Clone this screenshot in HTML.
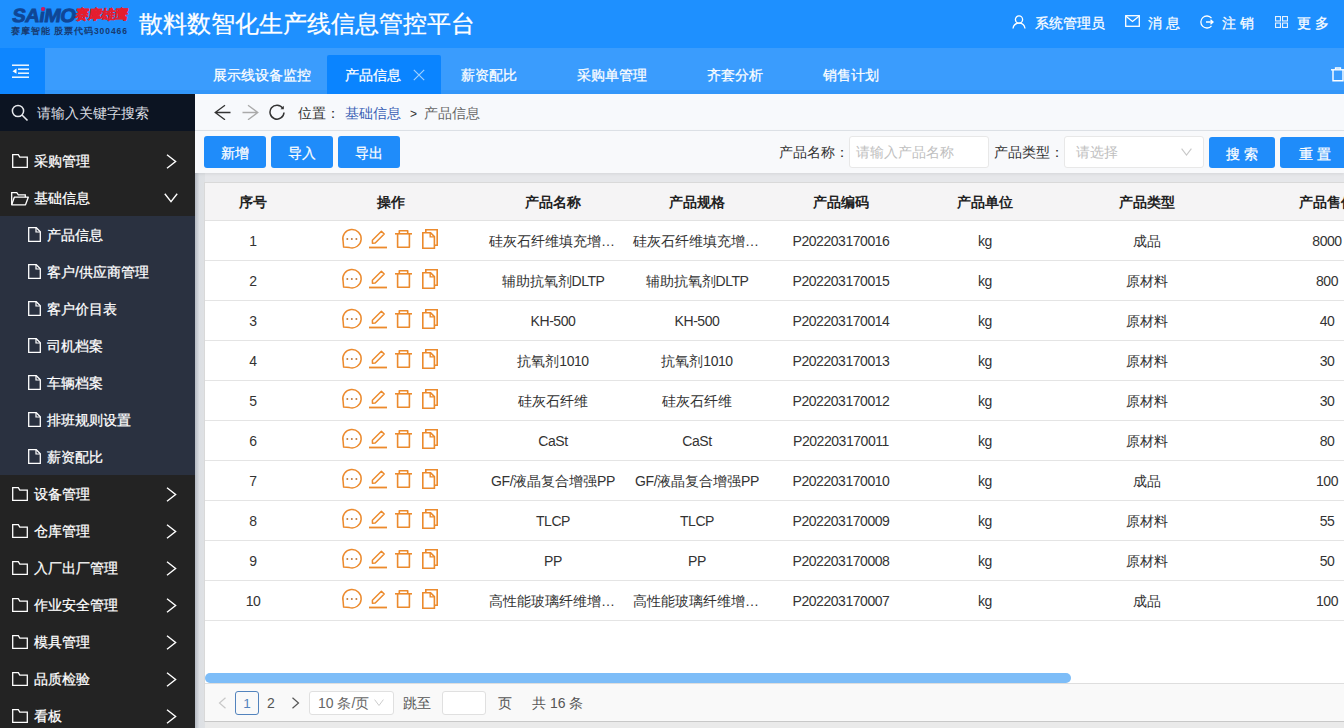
<!DOCTYPE html><html><head><meta charset="utf-8"><style>
*{box-sizing:border-box;margin:0;padding:0}
html,body{width:1344px;height:728px;overflow:hidden;font-family:"Liberation Sans",sans-serif;font-size:14px;color:#333;background:#e6e7ea;position:relative}
.tab,.mi,.btn,.wt{-webkit-text-stroke:0.25px currentColor}
div,span{position:absolute;white-space:nowrap}
#hdr{left:0;top:0;width:1344px;height:48px;background:#1e90ff}
#tabs{left:0;top:48px;width:1344px;height:46px;background:#3a9cfd;border-bottom:4px solid #3296f9}
#toggle{left:0;top:48px;width:45px;height:46px;background:#0e86ff}
.tab{top:56px;height:39px;line-height:39px;color:#fff;font-size:14px}
#side{left:0;top:94px;width:195px;height:634px;background:#232323}
#sside{left:0;top:94px;width:195px;height:37px;background:#0c1422}
.mi{left:0;width:195px;height:37px;color:#fff;font-size:14px}
.mi span{top:1px;line-height:37px}
#sub{left:0;top:216px;width:195px;height:259px;background:#2a3140}
#crumb{left:195px;top:94px;width:1149px;height:37px;background:#f7f9fc;border-bottom:1px solid #dfe3e8}
#tool{left:195px;top:131px;width:1149px;height:42px;background:#f8f9fb;box-shadow:0 1px 3px rgba(0,0,0,0.08)}
.btn{top:136px;height:32px;line-height:32px;padding-top:1px;text-align:center;color:#fff;background:#1f8cfa;border-radius:3px;font-size:14px}
#panel{left:204px;top:182px;width:1150px;height:540px;background:#fff;border:1px solid #d9d9d9;border-bottom-color:#c8c8c8}
#thead{left:205px;top:183px;width:1139px;height:38px;background:#f5f4f5;border-bottom:1px solid #e2e2e2}
.th{top:184px;height:37px;line-height:37px;text-align:center;font-weight:bold;color:#222;font-size:14px}
.row{left:205px;width:1139px;height:40px;border-bottom:1px solid #e4e4e4;background:#fff}
.td{height:40px;line-height:40px;text-align:center;color:#333;font-size:14px;overflow:hidden;text-overflow:ellipsis;padding:0 8px}
svg{position:absolute}
.lat{font-weight:normal;font-size:14px;letter-spacing:-0.45px}
</style></head><body><div style="left:195px;top:722px;width:1149px;height:6px;background:#eaeaea"></div><div id="hdr"></div><div id="tabs"></div><div id="toggle"></div><div id="side"></div><div id="sside"></div><div id="sub"></div><div style="left:195px;top:131px;width:10px;height:597px;background:linear-gradient(to right,#b6bbc3,#dde0e4 45%,#dfe1e4)"></div><div id="crumb"></div><div id="tool"></div><div id="panel"></div><div id="thead"></div><div class="wt" style="left:139px;top:7px;font-size:24px;line-height:34px;color:#fff">散料数智化生产线信息管控平台</div><div style="left:11px;top:4px;font-size:20px;line-height:22px;font-weight:bold;color:#0f4696;letter-spacing:-0.5px;-webkit-text-stroke:0.9px #0f4696;transform:skewX(-9deg) scaleY(0.95);transform-origin:0 100%">SAiMO</div><div style="left:41px;top:7.3px;width:3.8px;height:3.8px;border-radius:50%;background:#d8175a"></div><div style="left:74px;top:5px;font-size:13.5px;line-height:20px;font-weight:bold;color:#e51d2e;letter-spacing:-0.8px;-webkit-text-stroke:0.4px #e51d2e;transform:skewX(-6deg);transform-origin:0 100%">赛摩雄鹰</div><div style="left:11px;top:26px;font-size:8.5px;line-height:10px;font-weight:bold;color:#173a70;letter-spacing:0.95px">赛摩智能 股票代码300466</div><div class="wt" style="left:1035px;top:13px;line-height:20px;font-size:14px;color:#fff">系统管理员</div><div class="wt" style="left:1148px;top:13px;line-height:20px;font-size:14px;color:#fff">消 息</div><div class="wt" style="left:1222px;top:13px;line-height:20px;font-size:14px;color:#fff">注 销</div><div class="wt" style="left:1297px;top:13px;line-height:20px;font-size:14px;color:#fff">更 多</div><div style="left:327px;top:55px;width:114px;height:39px;background:#0a84ff;border-radius:2px 2px 0 0"></div><div class="tab" style="left:213px">展示线设备监控</div><div class="tab" style="left:345px">产品信息</div><div class="tab" style="left:461px">薪资配比</div><div class="tab" style="left:577px">采购单管理</div><div class="tab" style="left:707px">齐套分析</div><div class="tab" style="left:823px">销售计划</div><div style="left:37px;top:95px;line-height:37px;color:#dcdfe4;font-size:14px">请输入关键字搜索</div><div class="mi" style="top:142px"><span style="left:34px">采购管理</span></div><div class="mi" style="top:179px"><span style="left:34px">基础信息</span></div><div class="mi" style="top:216px"><span style="left:47px">产品信息</span></div><div class="mi" style="top:253px"><span style="left:47px">客户/供应商管理</span></div><div class="mi" style="top:290px"><span style="left:47px">客户价目表</span></div><div class="mi" style="top:327px"><span style="left:47px">司机档案</span></div><div class="mi" style="top:364px"><span style="left:47px">车辆档案</span></div><div class="mi" style="top:401px"><span style="left:47px">排班规则设置</span></div><div class="mi" style="top:438px"><span style="left:47px">薪资配比</span></div><div class="mi" style="top:475px"><span style="left:34px">设备管理</span></div><div class="mi" style="top:512px"><span style="left:34px">仓库管理</span></div><div class="mi" style="top:549px"><span style="left:34px">入厂出厂管理</span></div><div class="mi" style="top:586px"><span style="left:34px">作业安全管理</span></div><div class="mi" style="top:623px"><span style="left:34px">模具管理</span></div><div class="mi" style="top:660px"><span style="left:34px">品质检验</span></div><div class="mi" style="top:697px"><span style="left:34px">看板</span></div><div style="left:298px;top:95px;line-height:37px;color:#333">位置：</div><div style="left:345px;top:95px;line-height:37px;color:#3a5fb5">基础信息</div><div style="left:410px;top:96px;line-height:37px;color:#333;font-size:12px">&gt;</div><div style="left:424px;top:95px;line-height:37px;color:#666">产品信息</div><div class="btn" style="left:204px;width:62px">新增</div><div class="btn" style="left:271px;width:62px">导入</div><div class="btn" style="left:338px;width:62px">导出</div><div class="btn" style="left:1209px;width:66px;top:137px;height:31px">搜 索</div><div class="btn" style="left:1280px;width:70px;top:137px;height:31px">重 置</div><div style="left:779px;top:136px;line-height:32px;color:#333">产品名称：</div><div style="left:849px;top:136px;width:140px;height:32px;background:#fff;border:1px solid #e8e8e8;border-radius:3px"></div><div style="left:856px;top:137px;line-height:31px;color:#c0c0c0">请输入产品名称</div><div style="left:994px;top:136px;line-height:32px;color:#333">产品类型：</div><div style="left:1064px;top:136px;width:140px;height:32px;background:#fff;border:1px solid #e8e8e8;border-radius:3px"></div><div style="left:1076px;top:137px;line-height:31px;color:#c0c0c0">请选择</div><div class="th" style="left:205px;width:96px">序号</div><div class="th" style="left:301px;width:180px">操作</div><div class="th" style="left:481px;width:144px">产品名称</div><div class="th" style="left:625px;width:144px">产品规格</div><div class="th" style="left:769px;width:144px">产品编码</div><div class="th" style="left:913px;width:144px">产品单位</div><div class="th" style="left:1057px;width:180px">产品类型</div><div class="th" style="left:1237px;width:180px">产品售价</div><div class="row" style="top:221px"></div><div class="td" style="left:205px;top:221px;width:96px"><b class="lat">1</b></div><div class="td" style="left:481px;top:221px;width:144px">硅灰石纤维填充增强<b class="lat">PP</b></div><div class="td" style="left:625px;top:221px;width:144px">硅灰石纤维填充增强<b class="lat">PP</b></div><div class="td" style="left:769px;top:221px;width:144px"><b class="lat">P202203170016</b></div><div class="td" style="left:913px;top:221px;width:144px"><b class="lat">kg</b></div><div class="td" style="left:1057px;top:221px;width:180px">成品</div><div class="td" style="left:1237px;top:221px;width:180px"><b class="lat">8000</b></div><div class="row" style="top:261px"></div><div class="td" style="left:205px;top:261px;width:96px"><b class="lat">2</b></div><div class="td" style="left:481px;top:261px;width:144px">辅助抗氧剂<b class="lat">DLTP</b></div><div class="td" style="left:625px;top:261px;width:144px">辅助抗氧剂<b class="lat">DLTP</b></div><div class="td" style="left:769px;top:261px;width:144px"><b class="lat">P202203170015</b></div><div class="td" style="left:913px;top:261px;width:144px"><b class="lat">kg</b></div><div class="td" style="left:1057px;top:261px;width:180px">原材料</div><div class="td" style="left:1237px;top:261px;width:180px"><b class="lat">800</b></div><div class="row" style="top:301px"></div><div class="td" style="left:205px;top:301px;width:96px"><b class="lat">3</b></div><div class="td" style="left:481px;top:301px;width:144px"><b class="lat">KH-500</b></div><div class="td" style="left:625px;top:301px;width:144px"><b class="lat">KH-500</b></div><div class="td" style="left:769px;top:301px;width:144px"><b class="lat">P202203170014</b></div><div class="td" style="left:913px;top:301px;width:144px"><b class="lat">kg</b></div><div class="td" style="left:1057px;top:301px;width:180px">原材料</div><div class="td" style="left:1237px;top:301px;width:180px"><b class="lat">40</b></div><div class="row" style="top:341px"></div><div class="td" style="left:205px;top:341px;width:96px"><b class="lat">4</b></div><div class="td" style="left:481px;top:341px;width:144px">抗氧剂<b class="lat">1010</b></div><div class="td" style="left:625px;top:341px;width:144px">抗氧剂<b class="lat">1010</b></div><div class="td" style="left:769px;top:341px;width:144px"><b class="lat">P202203170013</b></div><div class="td" style="left:913px;top:341px;width:144px"><b class="lat">kg</b></div><div class="td" style="left:1057px;top:341px;width:180px">原材料</div><div class="td" style="left:1237px;top:341px;width:180px"><b class="lat">30</b></div><div class="row" style="top:381px"></div><div class="td" style="left:205px;top:381px;width:96px"><b class="lat">5</b></div><div class="td" style="left:481px;top:381px;width:144px">硅灰石纤维</div><div class="td" style="left:625px;top:381px;width:144px">硅灰石纤维</div><div class="td" style="left:769px;top:381px;width:144px"><b class="lat">P202203170012</b></div><div class="td" style="left:913px;top:381px;width:144px"><b class="lat">kg</b></div><div class="td" style="left:1057px;top:381px;width:180px">原材料</div><div class="td" style="left:1237px;top:381px;width:180px"><b class="lat">30</b></div><div class="row" style="top:421px"></div><div class="td" style="left:205px;top:421px;width:96px"><b class="lat">6</b></div><div class="td" style="left:481px;top:421px;width:144px"><b class="lat">CaSt</b></div><div class="td" style="left:625px;top:421px;width:144px"><b class="lat">CaSt</b></div><div class="td" style="left:769px;top:421px;width:144px"><b class="lat">P202203170011</b></div><div class="td" style="left:913px;top:421px;width:144px"><b class="lat">kg</b></div><div class="td" style="left:1057px;top:421px;width:180px">原材料</div><div class="td" style="left:1237px;top:421px;width:180px"><b class="lat">80</b></div><div class="row" style="top:461px"></div><div class="td" style="left:205px;top:461px;width:96px"><b class="lat">7</b></div><div class="td" style="left:481px;top:461px;width:144px"><b class="lat">GF/</b>液晶复合增强<b class="lat">PP</b></div><div class="td" style="left:625px;top:461px;width:144px"><b class="lat">GF/</b>液晶复合增强<b class="lat">PP</b></div><div class="td" style="left:769px;top:461px;width:144px"><b class="lat">P202203170010</b></div><div class="td" style="left:913px;top:461px;width:144px"><b class="lat">kg</b></div><div class="td" style="left:1057px;top:461px;width:180px">成品</div><div class="td" style="left:1237px;top:461px;width:180px"><b class="lat">100</b></div><div class="row" style="top:501px"></div><div class="td" style="left:205px;top:501px;width:96px"><b class="lat">8</b></div><div class="td" style="left:481px;top:501px;width:144px"><b class="lat">TLCP</b></div><div class="td" style="left:625px;top:501px;width:144px"><b class="lat">TLCP</b></div><div class="td" style="left:769px;top:501px;width:144px"><b class="lat">P202203170009</b></div><div class="td" style="left:913px;top:501px;width:144px"><b class="lat">kg</b></div><div class="td" style="left:1057px;top:501px;width:180px">原材料</div><div class="td" style="left:1237px;top:501px;width:180px"><b class="lat">55</b></div><div class="row" style="top:541px"></div><div class="td" style="left:205px;top:541px;width:96px"><b class="lat">9</b></div><div class="td" style="left:481px;top:541px;width:144px"><b class="lat">PP</b></div><div class="td" style="left:625px;top:541px;width:144px"><b class="lat">PP</b></div><div class="td" style="left:769px;top:541px;width:144px"><b class="lat">P202203170008</b></div><div class="td" style="left:913px;top:541px;width:144px"><b class="lat">kg</b></div><div class="td" style="left:1057px;top:541px;width:180px">原材料</div><div class="td" style="left:1237px;top:541px;width:180px"><b class="lat">50</b></div><div class="row" style="top:581px"></div><div class="td" style="left:205px;top:581px;width:96px"><b class="lat">10</b></div><div class="td" style="left:481px;top:581px;width:144px">高性能玻璃纤维增强<b class="lat">PP</b></div><div class="td" style="left:625px;top:581px;width:144px">高性能玻璃纤维增强<b class="lat">PP</b></div><div class="td" style="left:769px;top:581px;width:144px"><b class="lat">P202203170007</b></div><div class="td" style="left:913px;top:581px;width:144px"><b class="lat">kg</b></div><div class="td" style="left:1057px;top:581px;width:180px">成品</div><div class="td" style="left:1237px;top:581px;width:180px"><b class="lat">100</b></div><div style="left:205px;top:673px;width:866px;height:10px;background:#7dbdf8;border-radius:5px"></div><div style="left:205px;top:683px;width:1139px;height:38px;background:#f9f9f9;border-top:1px solid #dedede"></div><svg style="left:1012px;top:15px" width="14" height="14" viewBox="0 0 14 14" ><circle cx="7" cy="4.5" r="3.6" fill="none" stroke="#fff" stroke-width="1.3"/><path d="M1 13.5C1.5 9.8 4 8.2 7 8.2S12.5 9.8 13 13.5" fill="none" stroke="#fff" stroke-width="1.3"/></svg><svg style="left:1125px;top:15px" width="15" height="12" viewBox="0 0 15 12" ><rect x="0.7" y="0.7" width="13.6" height="10.6" fill="none" stroke="#fff" stroke-width="1.3"/><path d="M1 1.2L7.5 6.5L14 1.2" fill="none" stroke="#fff" stroke-width="1.3"/></svg><svg style="left:1200px;top:15px" width="14" height="14" viewBox="0 0 14 14" ><path d="M11.5 3.2A6 6 0 1 0 11.5 10.8" fill="none" stroke="#fff" stroke-width="1.3"/><path d="M6 7H13M10.5 4.8L13 7L10.5 9.2" fill="none" stroke="#fff" stroke-width="1.3"/></svg><svg style="left:1275px;top:16px" width="13" height="12" viewBox="0 0 13 12" ><g fill="none" stroke="#e6f2ff" stroke-width="1.1"><rect x="0.55" y="0.55" width="4.9" height="4.4"/><rect x="7.55" y="0.55" width="4.9" height="4.4"/><rect x="0.55" y="7.05" width="4.9" height="4.4"/><rect x="7.55" y="7.05" width="4.9" height="4.4"/></g></svg><svg style="left:12px;top:64px" width="17" height="15" viewBox="0 0 17 15" ><rect x="0" y="0.5" width="17" height="1.4" fill="#fff"/><rect x="6" y="4.5" width="11" height="1.4" fill="#fff"/><rect x="6" y="8.5" width="11" height="1.4" fill="#fff"/><rect x="0" y="12.5" width="17" height="1.4" fill="#fff"/><path d="M0.5 7.2L4.5 4.6V9.8Z" fill="#fff"/></svg><svg style="left:413px;top:69px" width="12" height="12" viewBox="0 0 12 12" ><path d="M0.8 0.8L11.2 11.2M11.2 0.8L0.8 11.2" stroke="#9fd0ff" stroke-width="1.2"/></svg><svg style="left:1331px;top:67px" width="14" height="15" viewBox="0 0 14 15" ><path d="M4.5 2.5V1H9.5V2.5" fill="none" stroke="#fff" stroke-width="1.3"/><path d="M0 2.8H14" stroke="#fff" stroke-width="1.4"/><path d="M2 3V13.8H12V3" fill="none" stroke="#fff" stroke-width="1.4"/></svg><svg style="left:11px;top:104px" width="18" height="18" viewBox="0 0 18 18" ><circle cx="7" cy="7" r="5.6" fill="none" stroke="#e8eaee" stroke-width="1.5"/><path d="M11 11L16.5 16.5" stroke="#e8eaee" stroke-width="1.6"/></svg><svg style="left:12px;top:154px" width="16" height="14" viewBox="0 0 16 14" ><path d="M0.7 13.3V0.7H6.3L7.8 3.2H15.3V13.3Z" fill="none" stroke="#fff" stroke-width="1.3" stroke-linejoin="miter"/></svg><svg style="left:166px;top:154px" width="11" height="15" viewBox="0 0 11 15" ><path d="M1 0.8L9.6 7.5L1 14.2" fill="none" stroke="#fff" stroke-width="1.4"/></svg><svg style="left:11px;top:192px" width="18" height="14" viewBox="0 0 18 14" ><path d="M0.7 12.8V0.7H5.8L7.3 2.8H14.3V5.2" fill="none" stroke="#fff" stroke-width="1.3"/><path d="M0.7 12.8L3.3 5.2H17.3L14.5 12.8Z" fill="none" stroke="#fff" stroke-width="1.3" stroke-linejoin="round"/></svg><svg style="left:164px;top:193px" width="14" height="10" viewBox="0 0 14 10" ><path d="M0.8 0.8L7 8.6L13.2 0.8" fill="none" stroke="#fff" stroke-width="1.4"/></svg><svg style="left:28px;top:227px" width="13" height="15" viewBox="0 0 13 15" ><path d="M0.7 0.7H8.3L12.3 4.7V14.3H0.7Z" fill="none" stroke="#fff" stroke-width="1.3"/><path d="M8 0.7V5H12.3" fill="none" stroke="#fff" stroke-width="1.2"/></svg><svg style="left:28px;top:264px" width="13" height="15" viewBox="0 0 13 15" ><path d="M0.7 0.7H8.3L12.3 4.7V14.3H0.7Z" fill="none" stroke="#fff" stroke-width="1.3"/><path d="M8 0.7V5H12.3" fill="none" stroke="#fff" stroke-width="1.2"/></svg><svg style="left:28px;top:301px" width="13" height="15" viewBox="0 0 13 15" ><path d="M0.7 0.7H8.3L12.3 4.7V14.3H0.7Z" fill="none" stroke="#fff" stroke-width="1.3"/><path d="M8 0.7V5H12.3" fill="none" stroke="#fff" stroke-width="1.2"/></svg><svg style="left:28px;top:338px" width="13" height="15" viewBox="0 0 13 15" ><path d="M0.7 0.7H8.3L12.3 4.7V14.3H0.7Z" fill="none" stroke="#fff" stroke-width="1.3"/><path d="M8 0.7V5H12.3" fill="none" stroke="#fff" stroke-width="1.2"/></svg><svg style="left:28px;top:375px" width="13" height="15" viewBox="0 0 13 15" ><path d="M0.7 0.7H8.3L12.3 4.7V14.3H0.7Z" fill="none" stroke="#fff" stroke-width="1.3"/><path d="M8 0.7V5H12.3" fill="none" stroke="#fff" stroke-width="1.2"/></svg><svg style="left:28px;top:412px" width="13" height="15" viewBox="0 0 13 15" ><path d="M0.7 0.7H8.3L12.3 4.7V14.3H0.7Z" fill="none" stroke="#fff" stroke-width="1.3"/><path d="M8 0.7V5H12.3" fill="none" stroke="#fff" stroke-width="1.2"/></svg><svg style="left:28px;top:449px" width="13" height="15" viewBox="0 0 13 15" ><path d="M0.7 0.7H8.3L12.3 4.7V14.3H0.7Z" fill="none" stroke="#fff" stroke-width="1.3"/><path d="M8 0.7V5H12.3" fill="none" stroke="#fff" stroke-width="1.2"/></svg><svg style="left:12px;top:487px" width="16" height="14" viewBox="0 0 16 14" ><path d="M0.7 13.3V0.7H6.3L7.8 3.2H15.3V13.3Z" fill="none" stroke="#fff" stroke-width="1.3" stroke-linejoin="miter"/></svg><svg style="left:166px;top:487px" width="11" height="15" viewBox="0 0 11 15" ><path d="M1 0.8L9.6 7.5L1 14.2" fill="none" stroke="#fff" stroke-width="1.4"/></svg><svg style="left:12px;top:524px" width="16" height="14" viewBox="0 0 16 14" ><path d="M0.7 13.3V0.7H6.3L7.8 3.2H15.3V13.3Z" fill="none" stroke="#fff" stroke-width="1.3" stroke-linejoin="miter"/></svg><svg style="left:166px;top:524px" width="11" height="15" viewBox="0 0 11 15" ><path d="M1 0.8L9.6 7.5L1 14.2" fill="none" stroke="#fff" stroke-width="1.4"/></svg><svg style="left:12px;top:561px" width="16" height="14" viewBox="0 0 16 14" ><path d="M0.7 13.3V0.7H6.3L7.8 3.2H15.3V13.3Z" fill="none" stroke="#fff" stroke-width="1.3" stroke-linejoin="miter"/></svg><svg style="left:166px;top:561px" width="11" height="15" viewBox="0 0 11 15" ><path d="M1 0.8L9.6 7.5L1 14.2" fill="none" stroke="#fff" stroke-width="1.4"/></svg><svg style="left:12px;top:598px" width="16" height="14" viewBox="0 0 16 14" ><path d="M0.7 13.3V0.7H6.3L7.8 3.2H15.3V13.3Z" fill="none" stroke="#fff" stroke-width="1.3" stroke-linejoin="miter"/></svg><svg style="left:166px;top:598px" width="11" height="15" viewBox="0 0 11 15" ><path d="M1 0.8L9.6 7.5L1 14.2" fill="none" stroke="#fff" stroke-width="1.4"/></svg><svg style="left:12px;top:635px" width="16" height="14" viewBox="0 0 16 14" ><path d="M0.7 13.3V0.7H6.3L7.8 3.2H15.3V13.3Z" fill="none" stroke="#fff" stroke-width="1.3" stroke-linejoin="miter"/></svg><svg style="left:166px;top:635px" width="11" height="15" viewBox="0 0 11 15" ><path d="M1 0.8L9.6 7.5L1 14.2" fill="none" stroke="#fff" stroke-width="1.4"/></svg><svg style="left:12px;top:672px" width="16" height="14" viewBox="0 0 16 14" ><path d="M0.7 13.3V0.7H6.3L7.8 3.2H15.3V13.3Z" fill="none" stroke="#fff" stroke-width="1.3" stroke-linejoin="miter"/></svg><svg style="left:166px;top:672px" width="11" height="15" viewBox="0 0 11 15" ><path d="M1 0.8L9.6 7.5L1 14.2" fill="none" stroke="#fff" stroke-width="1.4"/></svg><svg style="left:12px;top:709px" width="16" height="14" viewBox="0 0 16 14" ><path d="M0.7 13.3V0.7H6.3L7.8 3.2H15.3V13.3Z" fill="none" stroke="#fff" stroke-width="1.3" stroke-linejoin="miter"/></svg><svg style="left:166px;top:709px" width="11" height="15" viewBox="0 0 11 15" ><path d="M1 0.8L9.6 7.5L1 14.2" fill="none" stroke="#fff" stroke-width="1.4"/></svg><svg style="left:214px;top:104px" width="17" height="16" viewBox="0 0 17 16" ><path d="M16.5 8.5H1.2M11 1.2L1.2 8.5L11 15.8" fill="none" stroke="#333" stroke-width="1.3"/></svg><svg style="left:242px;top:104px" width="17" height="16" viewBox="0 0 17 16" ><path d="M0.5 8.5H15.8M6 1.2L15.8 8.5L6 15.8" fill="none" stroke="#aaa" stroke-width="1.3"/></svg><svg style="left:269px;top:104px" width="17" height="16" viewBox="0 0 17 16" ><path d="M13.8 4.2A7 7 0 1 0 15 8.5" fill="none" stroke="#333" stroke-width="1.5"/><path d="M14.8 1.8V5.2H11.5Z" fill="#333"/></svg><svg style="left:1181px;top:148px" width="11" height="8" viewBox="0 0 11 8" ><path d="M0.6 0.6L5.5 7L10.4 0.6" fill="none" stroke="#c8c8c8" stroke-width="1.1"/></svg><svg style="left:341px;top:228px" width="22" height="22" viewBox="0 0 22 22" ><path d="M2.1 13.1L2.6 19.1L8.6 19.6A9.2 9.2 0 1 0 2.1 13.1Z" fill="none" stroke="#ec8a2c" stroke-width="1.5" stroke-linejoin="round"/><circle cx="6.3" cy="10.9" r="1" fill="#c0793a"/><circle cx="10.8" cy="10.9" r="1" fill="#c0793a"/><circle cx="15.4" cy="10.9" r="1" fill="#c0793a"/></svg><svg style="left:369px;top:230px" width="18" height="19" viewBox="0 0 18 19" ><path d="M3.4 13.2L3.4 10.2L12.4 1.2L15.2 4L6.2 13Z" fill="none" stroke="#ec8a2c" stroke-width="1.5" stroke-linejoin="round"/><path d="M0 17.5H18" stroke="#ec8a2c" stroke-width="1.8"/></svg><svg style="left:395px;top:230px" width="17" height="19" viewBox="0 0 17 19" ><path d="M4.3 3.5V0.8H12.7V3.5" fill="none" stroke="#ec8a2c" stroke-width="1.6" stroke-linejoin="round"/><path d="M0 3.8H17" stroke="#ec8a2c" stroke-width="1.6"/><path d="M2.6 4V17.2H14.4V4" fill="none" stroke="#ec8a2c" stroke-width="1.6" stroke-linejoin="round"/></svg><svg style="left:422px;top:229px" width="16" height="20" viewBox="0 0 16 20" ><path d="M3.8 3.8V0.8H15.2V16.2H12.6" fill="none" stroke="#ec8a2c" stroke-width="1.6"/><path d="M0.8 3.8H8.6L12.4 7.6V19.2H0.8Z" fill="none" stroke="#ec8a2c" stroke-width="1.6"/><path d="M8.2 3.8V7.9H12.4" fill="none" stroke="#ec8a2c" stroke-width="1.4"/></svg><svg style="left:341px;top:268px" width="22" height="22" viewBox="0 0 22 22" ><path d="M2.1 13.1L2.6 19.1L8.6 19.6A9.2 9.2 0 1 0 2.1 13.1Z" fill="none" stroke="#ec8a2c" stroke-width="1.5" stroke-linejoin="round"/><circle cx="6.3" cy="10.9" r="1" fill="#c0793a"/><circle cx="10.8" cy="10.9" r="1" fill="#c0793a"/><circle cx="15.4" cy="10.9" r="1" fill="#c0793a"/></svg><svg style="left:369px;top:270px" width="18" height="19" viewBox="0 0 18 19" ><path d="M3.4 13.2L3.4 10.2L12.4 1.2L15.2 4L6.2 13Z" fill="none" stroke="#ec8a2c" stroke-width="1.5" stroke-linejoin="round"/><path d="M0 17.5H18" stroke="#ec8a2c" stroke-width="1.8"/></svg><svg style="left:395px;top:270px" width="17" height="19" viewBox="0 0 17 19" ><path d="M4.3 3.5V0.8H12.7V3.5" fill="none" stroke="#ec8a2c" stroke-width="1.6" stroke-linejoin="round"/><path d="M0 3.8H17" stroke="#ec8a2c" stroke-width="1.6"/><path d="M2.6 4V17.2H14.4V4" fill="none" stroke="#ec8a2c" stroke-width="1.6" stroke-linejoin="round"/></svg><svg style="left:422px;top:269px" width="16" height="20" viewBox="0 0 16 20" ><path d="M3.8 3.8V0.8H15.2V16.2H12.6" fill="none" stroke="#ec8a2c" stroke-width="1.6"/><path d="M0.8 3.8H8.6L12.4 7.6V19.2H0.8Z" fill="none" stroke="#ec8a2c" stroke-width="1.6"/><path d="M8.2 3.8V7.9H12.4" fill="none" stroke="#ec8a2c" stroke-width="1.4"/></svg><svg style="left:341px;top:308px" width="22" height="22" viewBox="0 0 22 22" ><path d="M2.1 13.1L2.6 19.1L8.6 19.6A9.2 9.2 0 1 0 2.1 13.1Z" fill="none" stroke="#ec8a2c" stroke-width="1.5" stroke-linejoin="round"/><circle cx="6.3" cy="10.9" r="1" fill="#c0793a"/><circle cx="10.8" cy="10.9" r="1" fill="#c0793a"/><circle cx="15.4" cy="10.9" r="1" fill="#c0793a"/></svg><svg style="left:369px;top:310px" width="18" height="19" viewBox="0 0 18 19" ><path d="M3.4 13.2L3.4 10.2L12.4 1.2L15.2 4L6.2 13Z" fill="none" stroke="#ec8a2c" stroke-width="1.5" stroke-linejoin="round"/><path d="M0 17.5H18" stroke="#ec8a2c" stroke-width="1.8"/></svg><svg style="left:395px;top:310px" width="17" height="19" viewBox="0 0 17 19" ><path d="M4.3 3.5V0.8H12.7V3.5" fill="none" stroke="#ec8a2c" stroke-width="1.6" stroke-linejoin="round"/><path d="M0 3.8H17" stroke="#ec8a2c" stroke-width="1.6"/><path d="M2.6 4V17.2H14.4V4" fill="none" stroke="#ec8a2c" stroke-width="1.6" stroke-linejoin="round"/></svg><svg style="left:422px;top:309px" width="16" height="20" viewBox="0 0 16 20" ><path d="M3.8 3.8V0.8H15.2V16.2H12.6" fill="none" stroke="#ec8a2c" stroke-width="1.6"/><path d="M0.8 3.8H8.6L12.4 7.6V19.2H0.8Z" fill="none" stroke="#ec8a2c" stroke-width="1.6"/><path d="M8.2 3.8V7.9H12.4" fill="none" stroke="#ec8a2c" stroke-width="1.4"/></svg><svg style="left:341px;top:348px" width="22" height="22" viewBox="0 0 22 22" ><path d="M2.1 13.1L2.6 19.1L8.6 19.6A9.2 9.2 0 1 0 2.1 13.1Z" fill="none" stroke="#ec8a2c" stroke-width="1.5" stroke-linejoin="round"/><circle cx="6.3" cy="10.9" r="1" fill="#c0793a"/><circle cx="10.8" cy="10.9" r="1" fill="#c0793a"/><circle cx="15.4" cy="10.9" r="1" fill="#c0793a"/></svg><svg style="left:369px;top:350px" width="18" height="19" viewBox="0 0 18 19" ><path d="M3.4 13.2L3.4 10.2L12.4 1.2L15.2 4L6.2 13Z" fill="none" stroke="#ec8a2c" stroke-width="1.5" stroke-linejoin="round"/><path d="M0 17.5H18" stroke="#ec8a2c" stroke-width="1.8"/></svg><svg style="left:395px;top:350px" width="17" height="19" viewBox="0 0 17 19" ><path d="M4.3 3.5V0.8H12.7V3.5" fill="none" stroke="#ec8a2c" stroke-width="1.6" stroke-linejoin="round"/><path d="M0 3.8H17" stroke="#ec8a2c" stroke-width="1.6"/><path d="M2.6 4V17.2H14.4V4" fill="none" stroke="#ec8a2c" stroke-width="1.6" stroke-linejoin="round"/></svg><svg style="left:422px;top:349px" width="16" height="20" viewBox="0 0 16 20" ><path d="M3.8 3.8V0.8H15.2V16.2H12.6" fill="none" stroke="#ec8a2c" stroke-width="1.6"/><path d="M0.8 3.8H8.6L12.4 7.6V19.2H0.8Z" fill="none" stroke="#ec8a2c" stroke-width="1.6"/><path d="M8.2 3.8V7.9H12.4" fill="none" stroke="#ec8a2c" stroke-width="1.4"/></svg><svg style="left:341px;top:388px" width="22" height="22" viewBox="0 0 22 22" ><path d="M2.1 13.1L2.6 19.1L8.6 19.6A9.2 9.2 0 1 0 2.1 13.1Z" fill="none" stroke="#ec8a2c" stroke-width="1.5" stroke-linejoin="round"/><circle cx="6.3" cy="10.9" r="1" fill="#c0793a"/><circle cx="10.8" cy="10.9" r="1" fill="#c0793a"/><circle cx="15.4" cy="10.9" r="1" fill="#c0793a"/></svg><svg style="left:369px;top:390px" width="18" height="19" viewBox="0 0 18 19" ><path d="M3.4 13.2L3.4 10.2L12.4 1.2L15.2 4L6.2 13Z" fill="none" stroke="#ec8a2c" stroke-width="1.5" stroke-linejoin="round"/><path d="M0 17.5H18" stroke="#ec8a2c" stroke-width="1.8"/></svg><svg style="left:395px;top:390px" width="17" height="19" viewBox="0 0 17 19" ><path d="M4.3 3.5V0.8H12.7V3.5" fill="none" stroke="#ec8a2c" stroke-width="1.6" stroke-linejoin="round"/><path d="M0 3.8H17" stroke="#ec8a2c" stroke-width="1.6"/><path d="M2.6 4V17.2H14.4V4" fill="none" stroke="#ec8a2c" stroke-width="1.6" stroke-linejoin="round"/></svg><svg style="left:422px;top:389px" width="16" height="20" viewBox="0 0 16 20" ><path d="M3.8 3.8V0.8H15.2V16.2H12.6" fill="none" stroke="#ec8a2c" stroke-width="1.6"/><path d="M0.8 3.8H8.6L12.4 7.6V19.2H0.8Z" fill="none" stroke="#ec8a2c" stroke-width="1.6"/><path d="M8.2 3.8V7.9H12.4" fill="none" stroke="#ec8a2c" stroke-width="1.4"/></svg><svg style="left:341px;top:428px" width="22" height="22" viewBox="0 0 22 22" ><path d="M2.1 13.1L2.6 19.1L8.6 19.6A9.2 9.2 0 1 0 2.1 13.1Z" fill="none" stroke="#ec8a2c" stroke-width="1.5" stroke-linejoin="round"/><circle cx="6.3" cy="10.9" r="1" fill="#c0793a"/><circle cx="10.8" cy="10.9" r="1" fill="#c0793a"/><circle cx="15.4" cy="10.9" r="1" fill="#c0793a"/></svg><svg style="left:369px;top:430px" width="18" height="19" viewBox="0 0 18 19" ><path d="M3.4 13.2L3.4 10.2L12.4 1.2L15.2 4L6.2 13Z" fill="none" stroke="#ec8a2c" stroke-width="1.5" stroke-linejoin="round"/><path d="M0 17.5H18" stroke="#ec8a2c" stroke-width="1.8"/></svg><svg style="left:395px;top:430px" width="17" height="19" viewBox="0 0 17 19" ><path d="M4.3 3.5V0.8H12.7V3.5" fill="none" stroke="#ec8a2c" stroke-width="1.6" stroke-linejoin="round"/><path d="M0 3.8H17" stroke="#ec8a2c" stroke-width="1.6"/><path d="M2.6 4V17.2H14.4V4" fill="none" stroke="#ec8a2c" stroke-width="1.6" stroke-linejoin="round"/></svg><svg style="left:422px;top:429px" width="16" height="20" viewBox="0 0 16 20" ><path d="M3.8 3.8V0.8H15.2V16.2H12.6" fill="none" stroke="#ec8a2c" stroke-width="1.6"/><path d="M0.8 3.8H8.6L12.4 7.6V19.2H0.8Z" fill="none" stroke="#ec8a2c" stroke-width="1.6"/><path d="M8.2 3.8V7.9H12.4" fill="none" stroke="#ec8a2c" stroke-width="1.4"/></svg><svg style="left:341px;top:468px" width="22" height="22" viewBox="0 0 22 22" ><path d="M2.1 13.1L2.6 19.1L8.6 19.6A9.2 9.2 0 1 0 2.1 13.1Z" fill="none" stroke="#ec8a2c" stroke-width="1.5" stroke-linejoin="round"/><circle cx="6.3" cy="10.9" r="1" fill="#c0793a"/><circle cx="10.8" cy="10.9" r="1" fill="#c0793a"/><circle cx="15.4" cy="10.9" r="1" fill="#c0793a"/></svg><svg style="left:369px;top:470px" width="18" height="19" viewBox="0 0 18 19" ><path d="M3.4 13.2L3.4 10.2L12.4 1.2L15.2 4L6.2 13Z" fill="none" stroke="#ec8a2c" stroke-width="1.5" stroke-linejoin="round"/><path d="M0 17.5H18" stroke="#ec8a2c" stroke-width="1.8"/></svg><svg style="left:395px;top:470px" width="17" height="19" viewBox="0 0 17 19" ><path d="M4.3 3.5V0.8H12.7V3.5" fill="none" stroke="#ec8a2c" stroke-width="1.6" stroke-linejoin="round"/><path d="M0 3.8H17" stroke="#ec8a2c" stroke-width="1.6"/><path d="M2.6 4V17.2H14.4V4" fill="none" stroke="#ec8a2c" stroke-width="1.6" stroke-linejoin="round"/></svg><svg style="left:422px;top:469px" width="16" height="20" viewBox="0 0 16 20" ><path d="M3.8 3.8V0.8H15.2V16.2H12.6" fill="none" stroke="#ec8a2c" stroke-width="1.6"/><path d="M0.8 3.8H8.6L12.4 7.6V19.2H0.8Z" fill="none" stroke="#ec8a2c" stroke-width="1.6"/><path d="M8.2 3.8V7.9H12.4" fill="none" stroke="#ec8a2c" stroke-width="1.4"/></svg><svg style="left:341px;top:508px" width="22" height="22" viewBox="0 0 22 22" ><path d="M2.1 13.1L2.6 19.1L8.6 19.6A9.2 9.2 0 1 0 2.1 13.1Z" fill="none" stroke="#ec8a2c" stroke-width="1.5" stroke-linejoin="round"/><circle cx="6.3" cy="10.9" r="1" fill="#c0793a"/><circle cx="10.8" cy="10.9" r="1" fill="#c0793a"/><circle cx="15.4" cy="10.9" r="1" fill="#c0793a"/></svg><svg style="left:369px;top:510px" width="18" height="19" viewBox="0 0 18 19" ><path d="M3.4 13.2L3.4 10.2L12.4 1.2L15.2 4L6.2 13Z" fill="none" stroke="#ec8a2c" stroke-width="1.5" stroke-linejoin="round"/><path d="M0 17.5H18" stroke="#ec8a2c" stroke-width="1.8"/></svg><svg style="left:395px;top:510px" width="17" height="19" viewBox="0 0 17 19" ><path d="M4.3 3.5V0.8H12.7V3.5" fill="none" stroke="#ec8a2c" stroke-width="1.6" stroke-linejoin="round"/><path d="M0 3.8H17" stroke="#ec8a2c" stroke-width="1.6"/><path d="M2.6 4V17.2H14.4V4" fill="none" stroke="#ec8a2c" stroke-width="1.6" stroke-linejoin="round"/></svg><svg style="left:422px;top:509px" width="16" height="20" viewBox="0 0 16 20" ><path d="M3.8 3.8V0.8H15.2V16.2H12.6" fill="none" stroke="#ec8a2c" stroke-width="1.6"/><path d="M0.8 3.8H8.6L12.4 7.6V19.2H0.8Z" fill="none" stroke="#ec8a2c" stroke-width="1.6"/><path d="M8.2 3.8V7.9H12.4" fill="none" stroke="#ec8a2c" stroke-width="1.4"/></svg><svg style="left:341px;top:548px" width="22" height="22" viewBox="0 0 22 22" ><path d="M2.1 13.1L2.6 19.1L8.6 19.6A9.2 9.2 0 1 0 2.1 13.1Z" fill="none" stroke="#ec8a2c" stroke-width="1.5" stroke-linejoin="round"/><circle cx="6.3" cy="10.9" r="1" fill="#c0793a"/><circle cx="10.8" cy="10.9" r="1" fill="#c0793a"/><circle cx="15.4" cy="10.9" r="1" fill="#c0793a"/></svg><svg style="left:369px;top:550px" width="18" height="19" viewBox="0 0 18 19" ><path d="M3.4 13.2L3.4 10.2L12.4 1.2L15.2 4L6.2 13Z" fill="none" stroke="#ec8a2c" stroke-width="1.5" stroke-linejoin="round"/><path d="M0 17.5H18" stroke="#ec8a2c" stroke-width="1.8"/></svg><svg style="left:395px;top:550px" width="17" height="19" viewBox="0 0 17 19" ><path d="M4.3 3.5V0.8H12.7V3.5" fill="none" stroke="#ec8a2c" stroke-width="1.6" stroke-linejoin="round"/><path d="M0 3.8H17" stroke="#ec8a2c" stroke-width="1.6"/><path d="M2.6 4V17.2H14.4V4" fill="none" stroke="#ec8a2c" stroke-width="1.6" stroke-linejoin="round"/></svg><svg style="left:422px;top:549px" width="16" height="20" viewBox="0 0 16 20" ><path d="M3.8 3.8V0.8H15.2V16.2H12.6" fill="none" stroke="#ec8a2c" stroke-width="1.6"/><path d="M0.8 3.8H8.6L12.4 7.6V19.2H0.8Z" fill="none" stroke="#ec8a2c" stroke-width="1.6"/><path d="M8.2 3.8V7.9H12.4" fill="none" stroke="#ec8a2c" stroke-width="1.4"/></svg><svg style="left:341px;top:588px" width="22" height="22" viewBox="0 0 22 22" ><path d="M2.1 13.1L2.6 19.1L8.6 19.6A9.2 9.2 0 1 0 2.1 13.1Z" fill="none" stroke="#ec8a2c" stroke-width="1.5" stroke-linejoin="round"/><circle cx="6.3" cy="10.9" r="1" fill="#c0793a"/><circle cx="10.8" cy="10.9" r="1" fill="#c0793a"/><circle cx="15.4" cy="10.9" r="1" fill="#c0793a"/></svg><svg style="left:369px;top:590px" width="18" height="19" viewBox="0 0 18 19" ><path d="M3.4 13.2L3.4 10.2L12.4 1.2L15.2 4L6.2 13Z" fill="none" stroke="#ec8a2c" stroke-width="1.5" stroke-linejoin="round"/><path d="M0 17.5H18" stroke="#ec8a2c" stroke-width="1.8"/></svg><svg style="left:395px;top:590px" width="17" height="19" viewBox="0 0 17 19" ><path d="M4.3 3.5V0.8H12.7V3.5" fill="none" stroke="#ec8a2c" stroke-width="1.6" stroke-linejoin="round"/><path d="M0 3.8H17" stroke="#ec8a2c" stroke-width="1.6"/><path d="M2.6 4V17.2H14.4V4" fill="none" stroke="#ec8a2c" stroke-width="1.6" stroke-linejoin="round"/></svg><svg style="left:422px;top:589px" width="16" height="20" viewBox="0 0 16 20" ><path d="M3.8 3.8V0.8H15.2V16.2H12.6" fill="none" stroke="#ec8a2c" stroke-width="1.6"/><path d="M0.8 3.8H8.6L12.4 7.6V19.2H0.8Z" fill="none" stroke="#ec8a2c" stroke-width="1.6"/><path d="M8.2 3.8V7.9H12.4" fill="none" stroke="#ec8a2c" stroke-width="1.4"/></svg><svg style="left:218px;top:697px" width="9" height="12"><path d="M7.5 0.8L1.5 6L7.5 11.2" fill="none" stroke="#c8c8c8" stroke-width="1.2"/></svg><div style="left:235px;top:691px;width:24px;height:24px;border:1px solid #5283bd;border-radius:3px"></div><div style="left:235px;top:692px;width:24px;line-height:24px;text-align:center;color:#5283bd;font-size:13.5px">1</div><div style="left:266px;top:691px;width:10px;line-height:24px;text-align:center;color:#555">2</div><svg style="left:291px;top:697px" width="9" height="12"><path d="M1.5 0.8L7.5 6L1.5 11.2" fill="none" stroke="#555" stroke-width="1.2"/></svg><div style="left:309px;top:691px;width:85px;height:24px;border:1px solid #e0e0e0;border-radius:3px;background:#fff"></div><div style="left:318px;top:691px;line-height:24px;color:#666">10 条/页</div><svg style="left:374px;top:699px" width="10" height="8"><path d="M0.6 0.6L5 6.5L9.4 0.6" fill="none" stroke="#ccc" stroke-width="1"/></svg><div style="left:403px;top:691px;line-height:24px;color:#555">跳至</div><div style="left:442px;top:691px;width:44px;height:24px;border:1px solid #e0e0e0;border-radius:3px;background:#fff"></div><div style="left:498px;top:691px;line-height:24px;color:#555">页</div><div style="left:532px;top:691px;line-height:24px;color:#555">共 16 条</div></body></html>
